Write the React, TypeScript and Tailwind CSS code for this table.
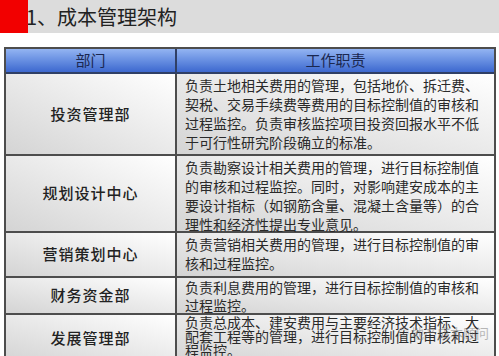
const ROWS = [
    {
        dept: "投资管理部",
        h: "h-[80px]",
        pad: "pt-[2px]",
        lead: "leading-[19px]",
        lines: [
            "负责土地相关费用的管理，包括地价、拆迁费、",
            "契税、交易手续费等费用的目标控制值的审核和",
            "过程监控。负责审核监控项目投资回报水平不低",
            "于可行性研究阶段确立的标准。",
        ],
    },
    {
        dept: "规划设计中心",
        h: "h-[77px]",
        pad: "pt-[2px]",
        lead: "leading-[19px]",
        lines: [
            "负责勘察设计相关费用的管理，进行目标控制值",
            "的审核和过程监控。同时，对影响建安成本的主",
            "要设计指标（如钢筋含量、混凝土含量等）的合",
            "理性和经济性提出专业意见。",
        ],
    },
    {
        dept: "营销策划中心",
        h: "h-[45px]",
        pad: "pt-[2px]",
        lead: "leading-[19px]",
        lines: ["负责营销相关费用的管理，进行目标控制值的审", "核和过程监控。"],
    },
    {
        dept: "财务资金部",
        h: "h-[37px]",
        pad: "pt-0",
        lead: "leading-[18px]",
        lines: ["负责利息费用的管理，进行目标控制值的审核和", "过程监控。"],
    },
    {
        dept: "发展管理部",
        h: "h-[48px]",
        pad: "pt-0",
        lead: "leading-[14px]",
        lines: [
            "负责总成本、建安费用与主要经济技术指标、大",
            "配套工程等的管理，进行目标控制值的审核和过",
            "程监控。",
        ],
    },
];

export default function App() {
    return (
        <div
            className="relative h-[356px] w-[499px] overflow-hidden bg-white"
            style={{ fontFamily: '"Noto Sans CJK SC", "Noto Sans", sans-serif' }}
        >
            {/* Title band */}
            <div className="flex h-[33px] items-center bg-[#dcdcdc]">
                <div className="h-[33px] w-[28px] bg-[#f20000]" />
                <h1 className="-ml-[2px] text-[20px] leading-none text-[#222]">1、成本管理架构</h1>
            </div>

            {/* Table */}
            <div className="ml-[4px] mt-[14px] w-[492px] border-2 border-[#4d4d4d]">
                <div className="flex h-[25px] border-b-2 border-[#2f3f66] bg-linear-to-b from-[#93b4f2] to-[#3d68cf] text-[15px] text-[#1b2850]">
                    <div className="flex w-[171px] items-center justify-center border-r-2 border-[#2f3f66]">部门</div>
                    <div className="flex flex-1 items-center justify-center">工作职责</div>
                </div>
                {ROWS.map((row, i) => (
                    <div
                        key={row.dept}
                        className={`flex ${row.h} ${i > 0 ? "border-t-2 border-[#4d4d4d]" : ""}`}
                    >
                        <div className="flex w-[171px] items-center justify-center border-r-2 border-[#4d4d4d] bg-linear-to-bl from-white to-[#d4d4d4] text-[15px] font-medium tracking-[1px] text-[#222]">
                            {row.dept}
                        </div>
                        <div
                            className={`flex-1 bg-linear-to-bl from-white to-[#d4d4d4] pl-[8px] ${row.pad} ${row.lead} whitespace-nowrap text-[14px] text-[#2a2a2a]`}
                        >
                            {row.lines.map((l) => (
                                <div key={l}>{l}</div>
                            ))}
                        </div>
                    </div>
                ))}
            </div>

            {/* Watermark */}
            <div className="absolute left-[398px] top-[326px] flex items-center gap-[2px] whitespace-nowrap text-[13px] leading-none text-[#777] opacity-50">
                <span className="text-[11px]">◎</span>
                <span>地产成本顾问</span>
            </div>
        </div>
    );
}
